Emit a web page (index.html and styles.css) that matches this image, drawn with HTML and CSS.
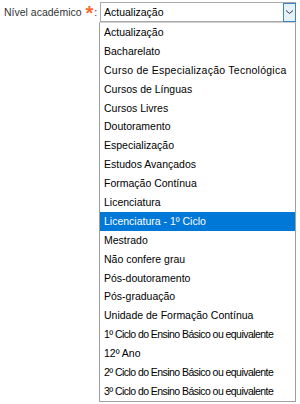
FILE: index.html
```html
<!DOCTYPE html>
<html lang="pt">
<head>
	<meta charset="UTF-8">
	<title>Nível académico</title>
	<link rel="stylesheet" href="styles.css">
</head>
<body>
	<div class="field">
		<label class="label">Nível académico <span class="req">*</span>:</label>
		<div class="select">
			<span class="value">Actualização</span>
			<span class="arrow">
				<svg width="9" height="6" viewBox="0 0 9 6"><path d="M1 1.5 L4.5 4.5 L8 1.5" fill="none" stroke="#333" stroke-width="1"/></svg>
			</span>
		</div>
	</div>
	<ul class="options">
		<li>Actualização</li>
		<li>Bacharelato</li>
		<li class="wide">Curso de Especialização Tecnológica</li>
		<li>Cursos de Línguas</li>
		<li>Cursos Livres</li>
		<li>Doutoramento</li>
		<li>Especialização</li>
		<li>Estudos Avançados</li>
		<li>Formação Contínua</li>
		<li>Licenciatura</li>
		<li class="selected">Licenciatura - 1º Ciclo</li>
		<li>Mestrado</li>
		<li>Não confere grau</li>
		<li>Pós-doutoramento</li>
		<li>Pós-graduação</li>
		<li>Unidade de Formação Contínua</li>
		<li class="long">1º Ciclo do Ensino Básico ou equivalente</li>
		<li>12º Ano</li>
		<li class="long">2º Ciclo do Ensino Básico ou equivalente</li>
		<li class="long">3º Ciclo do Ensino Básico ou equivalente</li>
	</ul>
</body>
</html>
```

FILE: styles.css
```css
body {
	margin: 0;
	background-color: white;
	font-family: "Liberation Sans", Arial, sans-serif;
	font-size: 10.5px;
	color: black;
}

.field {
	display: flex;
	align-items: center;
	padding-top: 2px;
}

.label {
	width: 96px;
	padding-left: 4px;
	color: #333;
	font-size: 10.5px;
	white-space: nowrap;
}

.req {
	display: inline-block;
	margin: 0 1px 0 1px;
	color: #ff6a2a;
	font-size: 20px;
	font-weight: bold;
	line-height: 10px;
	vertical-align: -4px;
}

.select {
	display: flex;
	align-items: center;
	width: 194px;
	height: 18px;
	border: 1px solid #a9a9a9;
}

.value {
	flex: 1;
	padding-left: 3px;
}

.arrow {
	display: flex;
	align-items: center;
	justify-content: center;
	width: 11px;
	height: 17px;
	border: 1px solid #3a84c4;
	margin-top: -1px;
	margin-bottom: -1px;
	margin-right: -1px;
	background-color: #e5f1fb;
}

.options {
	list-style: none;
	margin: 0 0 0 99px;
	padding: 0;
	width: 195px;
	border: 1px solid #a0a0a0;
	border-top: 1px solid #d0d0d0;
}

.options li {
	height: 18.9px;
	line-height: 18.9px;
	padding-left: 4px;
	white-space: nowrap;
}

.options .long {
	letter-spacing: -0.55px;
}

.options .wide {
	letter-spacing: 0.25px;
}

.options .selected {
	background-color: #0078d7;
	color: white;
}
```
